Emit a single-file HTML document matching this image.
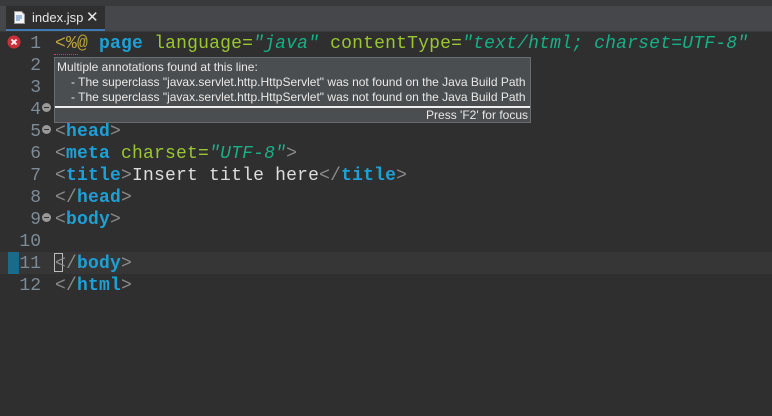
<!DOCTYPE html><html><head><style>
body{margin:0;width:772px;height:416px;background:#2f2f2f;overflow:hidden;position:relative;font-family:"Liberation Mono",monospace}
.top{position:absolute;left:0;top:0;width:772px;height:6px;background:#393a3c}
.bar{position:absolute;left:0;top:6px;width:772px;height:25px;background:#45474a}
.tab{position:absolute;left:6px;top:6px;width:99px;height:23px;background:#2f2f2f;border-bottom:2px solid #3d7ab8;font:13px "Liberation Sans",sans-serif;color:#e6e6e6}
.sep{position:absolute;left:0;top:31px;width:772px;height:1px;background:#3a3a3a}
.ln{position:absolute;left:0;width:41px;text-align:right;color:#7c8b96;font-size:18px;line-height:22px}
.code{position:absolute;left:55px;font-size:18px;line-height:22px;color:#ddd;white-space:pre;letter-spacing:0.2px}
.t{color:#1ea0d6;font-weight:bold}.p{color:#8a8a8a}.a{color:#9ac730}.v{color:#17b085;font-style:italic}.d{color:#bca33a}
.fold{position:absolute;left:42px;width:9px;height:9px;border-radius:50%;background:#9a9a9a}
.fold:after{content:"";position:absolute;left:2px;top:4px;width:5px;height:1px;background:#333}
.tip{position:absolute;left:54px;top:57px;width:475px;height:64px;background:#4b4e50;border:1px solid #6a6d70;font:12px "Liberation Sans",sans-serif;color:#e8e8e8}
</style></head><body>
<div class="top"></div><div class="bar"></div>
<div class="tab"><svg style="position:absolute;left:8px;top:5px" width="11" height="13"><path d="M0.5 .5h7l3 3v9h-10z" fill="#f4f4f4" stroke="#999"/><path d="M2 5h6M2 7h6M2 9h4" stroke="#4a7fc0"/></svg><span style="position:absolute;left:26px;top:4px">index.jsp</span><span style="position:absolute;left:80px;top:2px;font-size:15px">✕</span></div>
<div class="sep"></div>
<div style="position:absolute;left:0;top:252px;width:772px;height:22px;background:#363636"></div>
<div style="position:absolute;left:8px;top:252px;width:11px;height:22px;background:#1a6a8a"></div>
<div style="position:absolute;left:54px;top:253px;width:9px;height:19px;border:1px solid #bbb;box-sizing:border-box"></div>
<svg style="position:absolute;left:7px;top:35px" width="14" height="14"><circle cx="7" cy="7" r="6.5" fill="#c8303a"/><path d="M4.5 4.5l5 5M9.5 4.5l-5 5" stroke="#fff" stroke-width="1.8"/></svg>
<div class="ln" style="top:33px">1</div><div class="ln" style="top:55px">2</div><div class="ln" style="top:77px">3</div><div class="ln" style="top:99px">4</div><div class="ln" style="top:121px">5</div><div class="ln" style="top:143px">6</div><div class="ln" style="top:165px">7</div><div class="ln" style="top:187px">8</div><div class="ln" style="top:209px">9</div><div class="ln" style="top:231px">10</div><div class="ln" style="top:253px">11</div><div class="ln" style="top:275px">12</div>
<div class="fold" style="top:103px"></div><div class="fold" style="top:125px"></div><div class="fold" style="top:213px"></div>
<div class="code" style="top:33px"><span class="d">&lt;%@</span> <span class="t">page</span> <span class="a">language=</span><span class="v">"java"</span> <span class="a">contentType=</span><span class="v">"text/html; charset=UTF-8"</span></div>
<div style="position:absolute;left:54px;top:51px;width:24px;height:3px;border-bottom:1px dotted #e0307a"></div>
<div class="code" style="top:121px"><span class="p">&lt;</span><span class="t">head</span><span class="p">&gt;</span></div>
<div class="code" style="top:143px"><span class="p">&lt;</span><span class="t">meta</span> <span class="a">charset=</span><span class="v">"UTF-8"</span><span class="p">&gt;</span></div>
<div class="code" style="top:165px"><span class="p">&lt;</span><span class="t">title</span><span class="p">&gt;</span>Insert title here<span class="p">&lt;/</span><span class="t">title</span><span class="p">&gt;</span></div>
<div class="code" style="top:187px"><span class="p">&lt;/</span><span class="t">head</span><span class="p">&gt;</span></div>
<div class="code" style="top:209px"><span class="p">&lt;</span><span class="t">body</span><span class="p">&gt;</span></div>
<div class="code" style="top:253px"><span class="p">&lt;/</span><span class="t">body</span><span class="p">&gt;</span></div>
<div class="code" style="top:275px"><span class="p">&lt;/</span><span class="t">html</span><span class="p">&gt;</span></div>
<div class="tip">
<div style="position:absolute;left:2px;top:2px">Multiple annotations found at this line:</div>
<div style="position:absolute;left:16px;top:17px">- The superclass "javax.servlet.http.HttpServlet" was not found on the Java Build Path</div>
<div style="position:absolute;left:16px;top:32px">- The superclass "javax.servlet.http.HttpServlet" was not found on the Java Build Path</div>
<div style="position:absolute;left:0;top:48px;width:475px;height:2px;background:#eee"></div>
<div style="position:absolute;right:2px;top:50px">Press 'F2' for focus</div>
</div>
</body></html>
